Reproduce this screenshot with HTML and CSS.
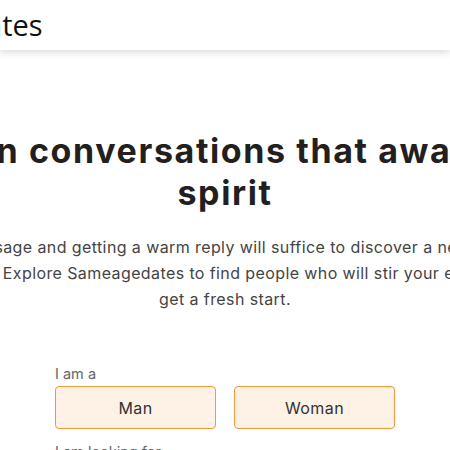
FILE: index.html
```html
<!DOCTYPE html>
<html>
<head>
<meta charset="utf-8">
<link rel="stylesheet" href="styles.css">
</head>
<body>
<header class="site-header">
  <div class="header-inner">
    <div class="logo">Sameagedates</div>
  </div>
</header>
<main class="hero">
  <div class="hero-inner">
    <h1 class="title">Engage in conversations that awaken your<br>spirit</h1>
    <p class="lead">Sending a message and getting a warm reply will suffice to discover a new kind of love.<br>Your heart deserves it. Explore Sameagedates to find people who will stir your emotions and make you<br>get a fresh start.</p>
  </div>
  <form class="signup">
    <div class="field">
      <div class="label">I am a</div>
      <div class="choices">
        <button type="button" class="choice">Man</button>
        <button type="button" class="choice">Woman</button>
      </div>
    </div>
    <div class="field">
      <div class="label">I am looking for</div>
    </div>
  </form>
</main>
</body>
</html>
```
FILE: styles.css
```css
html, body {
  margin: 0;
  padding: 0;
  background: #fff;
  overflow: hidden;
}
body {
  font-family: Inter, "Open Sans", sans-serif;
  color: #222;
}
.site-header {
  height: 50px;
  background: #fff;
  box-shadow: 0 2px 8px rgba(0,0,0,0.16);
  display: flex;
  justify-content: center;
  position: relative;
  z-index: 2;
}
.header-inner {
  flex: 0 0 760px;
  display: flex;
  align-items: center;
}
.logo {
  font-family: "Open Sans", sans-serif;
  font-size: 29px;
  color: #111;
  padding-bottom: 2px;
}
.hero {
  display: flex;
  flex-direction: column;
  align-items: center;
  padding-top: 80px;
}
.hero-inner {
  flex: none;
  width: 1100px;
  text-align: center;
}
.title {
  margin: 0;
  font-size: 34px;
  line-height: 42px;
  font-weight: 700;
  letter-spacing: 1.6px;
  color: #231f20;
}
.lead {
  margin: 20px 0 0;
  font-size: 16px;
  line-height: 26px;
  letter-spacing: 0.4px;
  color: #444;
}
.signup {
  width: 340px;
  margin-top: 53px;
}
.label {
  font-size: 14.5px;
  color: #666;
  line-height: 18px;
  margin-bottom: 3px;
}
.choices {
  display: flex;
  gap: 18px;
}
.choice {
  flex: 1;
  height: 43px;
  background: #fef1e6;
  border: 1px solid #f5963e;
  border-radius: 4px;
  font-family: inherit;
  font-size: 16px;
  letter-spacing: 0.4px;
  color: #333;
}
.field + .field {
  margin-top: 14px;
}
```
